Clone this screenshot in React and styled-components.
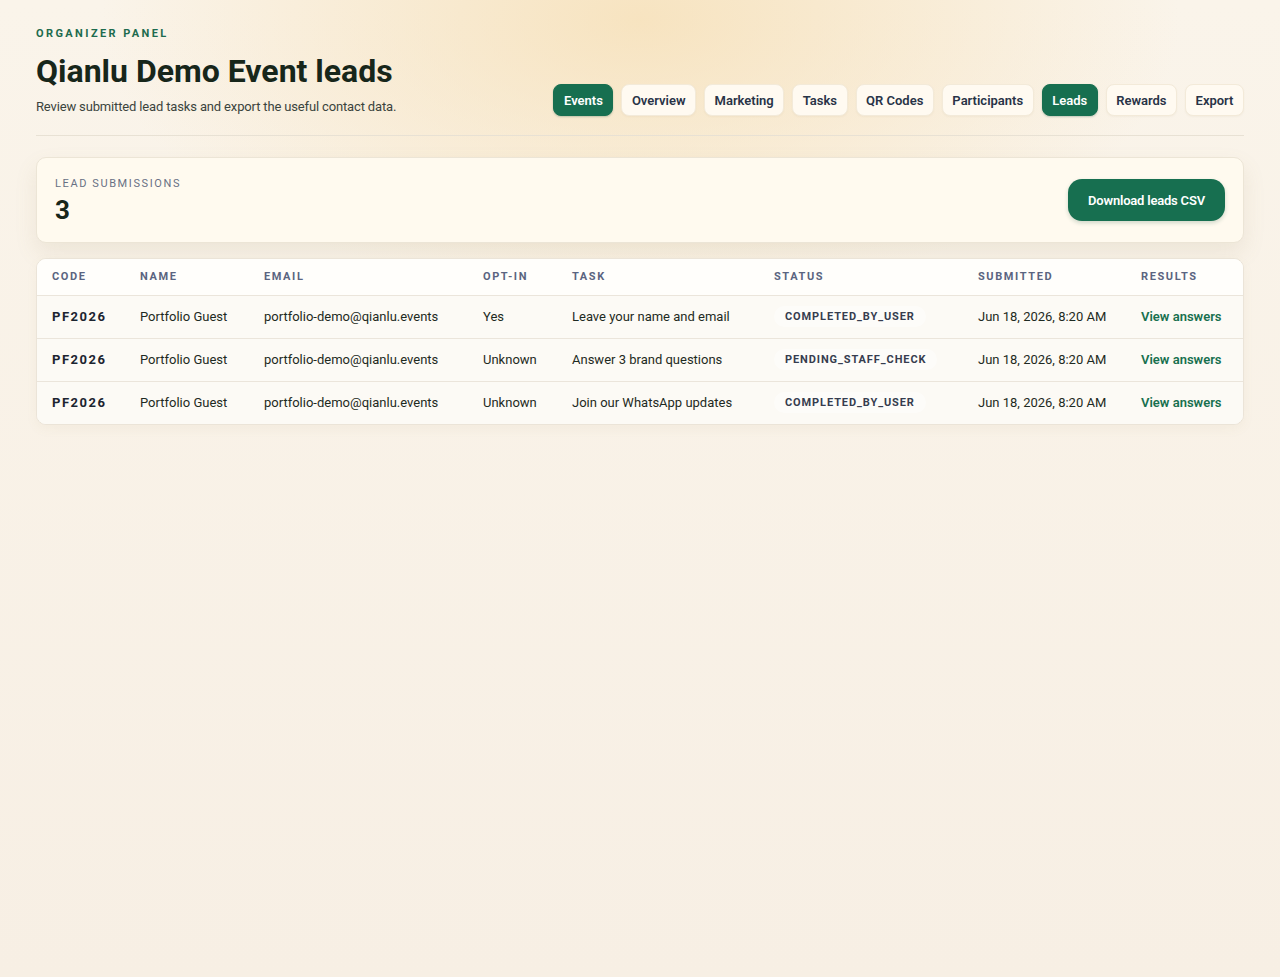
import React from "react";
import styled, { createGlobalStyle } from "styled-components";

const Global = createGlobalStyle`
  html, body { margin: 0; padding: 0; }
  body {
    font-family: Roboto, "Liberation Sans", Arial, sans-serif;
    color: #1c2a1f;
    min-height: 977px;
    background:
      radial-gradient(ellipse 540px 280px at 640px 20px, rgba(246, 222, 178, 0.75), rgba(246, 222, 178, 0) 100%),
      linear-gradient(180deg, #faf4ea 0%, #f7efe4 100%);
  }
  * { box-sizing: border-box; }
`;

const Page = styled.div`
  padding: 27px 36px 40px;
  min-height: 977px;
`;

const Header = styled.header`
  display: flex;
  align-items: flex-end;
  justify-content: space-between;
  padding-bottom: 19px;
  border-bottom: 1px solid #e8e1d4;
`;

const TitleBlock = styled.div`
  display: flex;
  flex-direction: column;
`;

const Eyebrow = styled.div`
  font-size: 11px;
  font-weight: 700;
  letter-spacing: 2.4px;
  color: #1d6b4e;
  text-transform: uppercase;
  line-height: 14px;
`;

const Title = styled.h1`
  margin: 11px 0 0;
  font-size: 32px;
  font-weight: 700;
  letter-spacing: 0;
  color: #17261a;
  line-height: 38px;
`;

const Subtitle = styled.p`
  margin: 8px 0 0;
  font-size: 13px;
  letter-spacing: -0.15px;
  color: #3b443d;
  line-height: 18px;
`;

const Nav = styled.nav`
  display: flex;
  gap: 8px;
`;

const NavButton = styled.button`
  height: 32px;
  padding: 0 9.5px;
  border-radius: 8px;
  border: 1px solid ${(p) => (p.$active ? "#176f50" : "#f3ead9")};
  background: ${(p) => (p.$active ? "#176f50" : "#fffaf1")};
  color: ${(p) => (p.$active ? "#ffffff" : "#283347")};
  font-family: inherit;
  font-size: 13px;
  font-weight: 600;
  cursor: pointer;
  box-shadow: ${(p) => (p.$active ? "0 1px 2px rgba(20,80,55,0.25)" : "0 1px 2px rgba(120,90,40,0.05)")};
`;

const SummaryCard = styled.section`
  margin-top: 21px;
  display: flex;
  align-items: center;
  justify-content: space-between;
  padding: 18px;
  height: 86px;
  border-radius: 10px;
  border: 1px solid #ece5d6;
  background: #fffaef;
  box-shadow: 0 10px 22px rgba(150, 130, 90, 0.12);
`;

const Stat = styled.div`
  display: flex;
  flex-direction: column;
`;

const StatLabel = styled.div`
  font-size: 11px;
  letter-spacing: 1.6px;
  color: #687084;
  text-transform: uppercase;
  line-height: 14px;
`;

const StatValue = styled.div`
  margin-top: 5px;
  font-size: 26px;
  font-weight: 700;
  color: #17261a;
  line-height: 28px;
`;

const PrimaryButton = styled.button`
  height: 42px;
  width: 157px;
  border: none;
  border-radius: 14px;
  background: #176f50;
  color: #ffffff;
  font-family: inherit;
  font-size: 13px;
  font-weight: 600;
  letter-spacing: -0.2px;
  cursor: pointer;
  box-shadow: 0 2px 4px rgba(20, 80, 55, 0.2);
`;

const TableCard = styled.section`
  margin-top: 15px;
  border-radius: 10px;
  border: 1px solid #ebe4d8;
  background: #fffdf9;
  overflow: hidden;
  box-shadow: 0 4px 12px rgba(150, 130, 90, 0.06);
`;

const Table = styled.table`
  width: 100%;
  border-collapse: collapse;
  table-layout: fixed;
`;

const Th = styled.th`
  height: 36px;
  padding: 0 0 0 15px;
  text-align: left;
  font-size: 11px;
  font-weight: 700;
  letter-spacing: 1.6px;
  color: #5a6480;
  text-transform: uppercase;
  background: #fffefb;
  border-bottom: 1px solid #ebe5db;
`;

const Tr = styled.tr`
  background: #fcfaf5;
  & + & td {
    border-top: 1px solid #ebe5db;
  }
`;

const Td = styled.td`
  height: 43px;
  padding: 0 0 0 15px;
  font-size: 13px;
  color: #1e2a22;
  white-space: nowrap;
`;

const Code = styled.span`
  font-weight: 700;
  letter-spacing: 1.5px;
  color: #1c2430;
`;

const StatusPill = styled.span`
  display: inline-block;
  padding: 4px 11px;
  border-radius: 999px;
  background: rgba(255, 255, 255, 0.45);
  font-size: 11px;
  font-weight: 700;
  letter-spacing: 0.9px;
  color: #363d4f;
`;

const Link = styled.a`
  color: #17704f;
  font-weight: 600;
  text-decoration: none;
  cursor: pointer;
`;

const tabs = ["Events", "Overview", "Marketing", "Tasks", "QR Codes", "Participants", "Leads", "Rewards", "Export"];
const activeTabs = ["Events", "Leads"];

const cols = [
  { label: "Code", w: 88 },
  { label: "Name", w: 124 },
  { label: "Email", w: 219 },
  { label: "Opt-in", w: 89 },
  { label: "Task", w: 202 },
  { label: "Status", w: 204 },
  { label: "Submitted", w: 163 },
  { label: "Results", w: 119 },
];

const rows = [
  { optIn: "Yes", task: "Leave your name and email", status: "COMPLETED_BY_USER" },
  { optIn: "Unknown", task: "Answer 3 brand questions", status: "PENDING_STAFF_CHECK" },
  { optIn: "Unknown", task: "Join our WhatsApp updates", status: "COMPLETED_BY_USER" },
];

export default function App() {
  return (
    <>
      <Global />
      <Page>
        <Header>
          <TitleBlock>
            <Eyebrow>Organizer Panel</Eyebrow>
            <Title>Qianlu Demo Event leads</Title>
            <Subtitle>Review submitted lead tasks and export the useful contact data.</Subtitle>
          </TitleBlock>
          <Nav>
            {tabs.map((t) => (
              <NavButton key={t} $active={activeTabs.includes(t)}>
                {t}
              </NavButton>
            ))}
          </Nav>
        </Header>

        <SummaryCard>
          <Stat>
            <StatLabel>Lead submissions</StatLabel>
            <StatValue>3</StatValue>
          </Stat>
          <PrimaryButton>Download leads CSV</PrimaryButton>
        </SummaryCard>

        <TableCard>
          <Table>
            <colgroup>
              {cols.map((c) => (
                <col key={c.label} style={{ width: c.w }} />
              ))}
            </colgroup>
            <thead>
              <tr>
                {cols.map((c) => (
                  <Th key={c.label}>{c.label}</Th>
                ))}
              </tr>
            </thead>
            <tbody>
              {rows.map((r, i) => (
                <Tr key={i}>
                  <Td><Code>PF2026</Code></Td>
                  <Td>Portfolio Guest</Td>
                  <Td>portfolio-demo@qianlu.events</Td>
                  <Td>{r.optIn}</Td>
                  <Td>{r.task}</Td>
                  <Td><StatusPill>{r.status}</StatusPill></Td>
                  <Td>Jun 18, 2026, 8:20 AM</Td>
                  <Td><Link>View answers</Link></Td>
                </Tr>
              ))}
            </tbody>
          </Table>
        </TableCard>
      </Page>
    </>
  );
}
